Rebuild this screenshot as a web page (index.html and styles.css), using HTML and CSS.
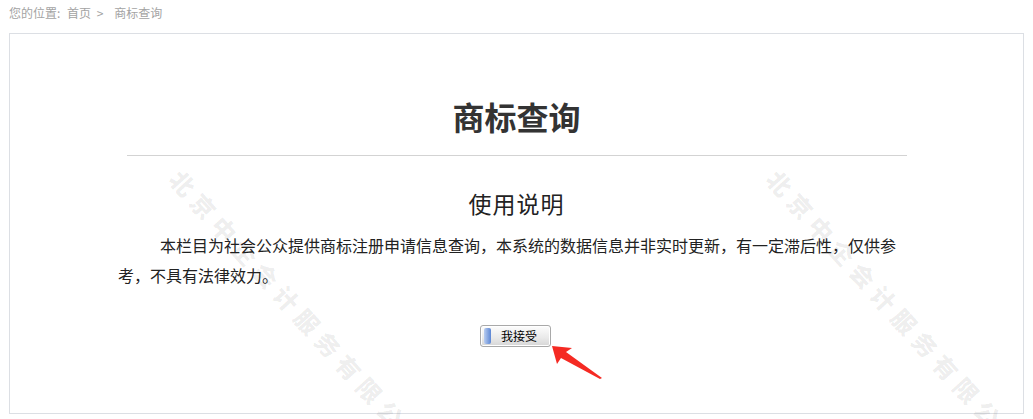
FILE: index.html
```html
<!DOCTYPE html>
<html lang="zh-CN">
<head>
  <meta charset="UTF-8">
  <title>商标查询</title>
  <link rel="stylesheet" href="styles.css">
</head>
<body>
<div class="page">

  <!-- Breadcrumb -->
  <div class="crumb">
    <span class="crumb-label">您的位置:</span>
    <a class="crumb-link" href="#">首页</a>
    <span class="crumb-sep">&gt;</span>
    <span class="crumb-current">商标查询</span>
  </div>

  <!-- Main box -->
  <div class="main-box">
    <h1 class="page-title">商标查询</h1>
    <div class="title-line"></div>
    <h2 class="sub-title">使用说明</h2>
    <p class="notice">本栏目为社会公众提供商标注册申请信息查询，本系统的数据信息并非实时更新，有一定滞后性，仅供参考，不具有法律效力。</p>
    <div class="btn-row">
      <button class="accept-btn"><span class="btn-cap"></span><span class="btn-text">我接受</span></button>
    </div>
  </div>

  <!-- Red annotation arrow -->
  <svg class="arrow" width="70" height="50" viewBox="540 335 70 50">
    <polygon points="552,346 572,348 566,352 602,378 600,379 561,358 557,364" fill="#f52a23"/>
  </svg>

  <!-- Watermarks -->
  <div class="watermark wm-1">北京中企会计服务有限公司</div>
  <div class="watermark wm-2">北京中企会计服务有限公司</div>
</div>
</body>
</html>
```

FILE: styles.css
```css
body {
  margin: 0;
  background: #fff;
  font-family: "Noto Sans CJK SC", "Liberation Sans", sans-serif;
  overflow: hidden;
}

.page {
  position: relative;
  width: 1033px;
  height: 419px;
  overflow: hidden;
}

/* Breadcrumb */
.crumb {
  height: 33px;
  line-height: 26px;
  padding-left: 9px;
  font-size: 12px;
  color: #a3a3a3;
}

.crumb-label {
  margin-right: 4px;
}

.crumb-link {
  color: #a3a3a3;
  text-decoration: none;
}

.crumb-sep {
  margin: 0 8px 0 3px;
}

/* Main box */
.main-box {
  margin-left: 9px;
  width: 1015px;
  height: 381px;
  border: 1px solid #dcdfe4;
  box-sizing: border-box;
  padding-top: 62px;
}

.page-title {
  margin: 0;
  font-size: 32px;
  line-height: 40px;
  font-weight: bold;
  color: #333;
  text-align: center;
}

.title-line {
  width: 780px;
  height: 1px;
  margin: 19px auto 0;
  background: #d3d3d3;
}

.sub-title {
  margin: 29px 0 0;
  font-size: 23px;
  line-height: 36px;
  font-weight: normal;
  color: #222;
  text-align: center;
  letter-spacing: 1px;
}

.notice {
  width: 786px;
  margin: 9px 0 0 108px;
  font-size: 16px;
  line-height: 30px;
  color: #222;
  text-indent: 42px;
}

.btn-row {
  display: flex;
  justify-content: center;
  margin-top: 35px;
  padding-right: 2px;
}

.accept-btn {
  display: flex;
  align-items: center;
  width: 71px;
  height: 22px;
  padding: 0 3px;
  border: 1px solid #a9a9a9;
  border-radius: 3px;
  background: linear-gradient(#fdfdfd, #e9e9e9 60%, #d6d6d6);
  box-shadow: inset 0 0 0 1px #fff;
  font-family: "Noto Sans CJK SC", sans-serif;
  font-size: 12px;
  color: #000;
  cursor: pointer;
}

.btn-cap {
  width: 7px;
  height: 16px;
  border-radius: 2px;
  background: linear-gradient(to right, #b9cdf0, #5c86d4);
}

.btn-text {
  flex: 1;
  text-align: center;
  line-height: 20px;
}

/* Overlays */
.arrow {
  position: absolute;
  left: 540px;
  top: 335px;
}

.watermark {
  position: absolute;
  top: 171px;
  white-space: nowrap;
  font-size: 24px;
  line-height: 24px;
  font-weight: 900;
  letter-spacing: 7px;
  color: rgba(0, 0, 0, 0.075);
  transform-origin: 12px 12px;
  transform: rotate(48deg);
  pointer-events: none;
}

.wm-1 {
  left: 171px;
}

.wm-2 {
  left: 768px;
}
```
